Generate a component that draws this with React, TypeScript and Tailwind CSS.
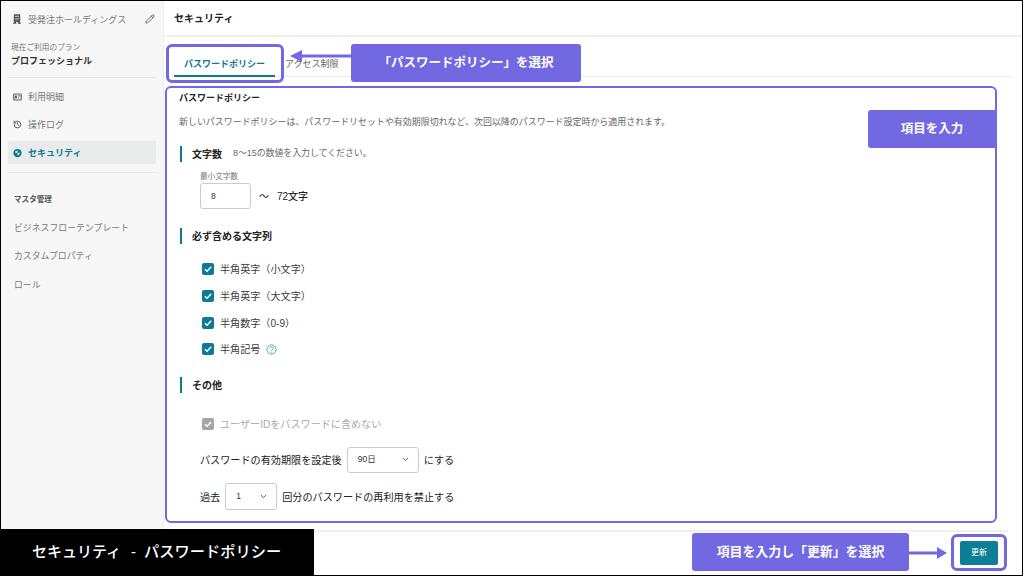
import React from "react";
import { History, Pencil, ChevronDown } from "lucide-react";

function Building() {
  return (
    <svg viewBox="0 0 10 12" className="w-[8px] h-[10px] text-[#555]" fill="currentColor">
      <path d="M1 0h8v11h1v1H6V9.5H4V12H0v-1h1zM3 2v1.5h1.5V2zm2.5 0v1.5H7V2zM3 5v1.5h1.5V5zm2.5 0v1.5H7V5z" fillRule="evenodd" />
    </svg>
  );
}
function Receipt() {
  return (
    <svg viewBox="0 0 12 10" className="w-[9px] h-[8px] text-[#666]" fill="none" stroke="currentColor" strokeWidth="1.6">
      <rect x="1" y="1" width="10" height="8" rx="1" />
      <path d="M7 3.5h2.5M7 6.5h1" />
      <rect x="2.4" y="3" width="3" height="4" fill="currentColor" stroke="none" />
    </svg>
  );
}
function Shield() {
  return (
    <svg viewBox="0 0 12 12" className="w-[9px] h-[10px]" fill="#0c7a91">
      <circle cx="6" cy="6" r="5.5" />
      <path d="M6 2.6 3 4v1.8h3zM6 5.8v3.4l2.6-1.5.5-2z" fill="#e9eaea" />
    </svg>
  );
}
function Check({ disabled }: { disabled?: boolean }) {
  return (
    <span className={`flex h-[12px] w-[12px] items-center justify-center rounded-[2px] ${disabled ? "bg-[#a3a6a8]" : "bg-[#0c7a91]"}`}>
      <svg viewBox="0 0 12 12" className="h-[10px] w-[10px]" fill="none" stroke="#fff" strokeWidth="1.7">
        <path d="M2.2 6.2 4.9 8.8 9.8 3.4" />
      </svg>
    </span>
  );
}
function Section({ children }: { children: React.ReactNode }) {
  return <div className="ml-px flex h-[16px] items-center border-l-2 border-[#0c7a91] pl-[10px] text-[10px] font-bold text-[#222]">{children}</div>;
}
function CheckRow({ label, extra }: { label: string; extra?: React.ReactNode }) {
  return (
    <div className="flex h-[26.7px] items-center gap-[6px] pl-[23px] text-[10.1px] text-[#3c3c3c]">
      <Check />
      <span className="pt-[1px]">{label}</span>
      {extra}
    </div>
  );
}
function Select({ value, w, h }: { value: string; w: string; h: string }) {
  return (
    <span className={`flex items-center justify-between rounded-[3px] border border-[#c9cccd] bg-white pl-[10px] pr-[8px] text-[8.5px] text-[#333] ${w} ${h}`}>
      {value}
      <ChevronDown size={9} strokeWidth={2.4} className="text-[#444]" />
    </span>
  );
}
function NavRow({ icon, label, active }: { icon?: React.ReactNode; label: string; active?: boolean }) {
  return (
    <div className={`mx-[7px] flex h-[23px] items-center gap-[6px] rounded-[2px] px-[5px] text-[9px] ${active ? "bg-[#e9eaea] font-bold text-[#0c7a91]" : "text-[#777]"}`}>
      <span className="flex w-[9px] justify-center">{icon}</span>
      <span className="pt-[2px]">{label}</span>
    </div>
  );
}

export default function App() {
  return (
    <div
      className="relative flex h-[576px] w-[1023px] overflow-hidden border border-black bg-white"
      style={{ fontFamily: '"Liberation Sans","Noto Sans CJK JP",sans-serif' }}
    >
      <aside className="flex w-[163px] shrink-0 flex-col border-r border-[#eeeeee] bg-[#f7f7f7]">
        <div className="flex h-[36px] items-center pl-[12px] pr-[8px] text-[9px] text-[#777]">
          <Building />
          <span className="ml-[7px] flex-1 pt-[3px]">受発注ホールディングス</span>
          <Pencil size={10} className="text-[#555]" />
        </div>
        <div className="mt-[4px] flex h-[14px] items-center pl-[10px] text-[7.7px] text-[#777]">現在ご利用のプラン</div>
        <div className="flex h-[14px] items-center pl-[10px] text-[9px] font-bold text-[#333]">プロフェッショナル</div>
        <div className="mx-[7px] mt-[8px] h-px bg-[#e8e8e8]" />
        <div className="mt-[7px] flex flex-col gap-[5px]">
          <NavRow icon={<Receipt />} label="利用明細" />
          <NavRow icon={<History size={9} strokeWidth={2.4} className="text-[#555]" />} label="操作ログ" />
          <NavRow icon={<Shield />} label="セキュリティ" active />
        </div>
        <div className="mx-[7px] mt-[8px] h-px bg-[#e8e8e8]" />
        <div className="mt-[20px] flex h-[14px] items-center pl-[13px] text-[7.6px] font-bold text-[#555]">マスタ管理</div>
        <div className="mt-[10px] flex flex-col gap-[5.4px]">
          <div className="flex h-[23px] items-center pl-[13px] text-[8.9px] text-[#777]">ビジネスフローテンプレート</div>
          <div className="flex h-[23px] items-center pl-[13px] text-[8.9px] text-[#777]">カスタムプロパティ</div>
          <div className="flex h-[23px] items-center pl-[13px] text-[8.9px] text-[#777]">ロール</div>
        </div>
      </aside>

      <main className="flex min-w-0 flex-1 flex-col">
        <header className="flex h-[36px] shrink-0 items-center border-b-2 border-[#f0f0f0] pl-[10px] text-[10px] font-bold text-[#222]">セキュリティ</header>
        <div className="ml-[10px] mr-[9px] flex h-[40px] shrink-0 items-end border-b border-[#ececec] text-[9px]">
          <div className="mb-[-1px] flex h-[26px] w-[101px] items-center justify-center border-b-2 border-[#0c7a91] pt-[4px] font-bold text-[#0c7a91]">パスワードポリシー</div>
          <div className="ml-[10px] flex h-[26px] items-center pt-[4px] text-[#666]">アクセス制限</div>
        </div>

        <section className="flex-1 pl-[15px]">
          <div className="mt-[14px] flex h-[14px] items-center pt-[2px] text-[9px] font-bold text-[#222]">パスワードポリシー</div>
          <div className="mt-[9px] flex h-[14px] items-center pt-[4px] text-[8.96px] text-[#666]">新しいパスワードポリシーは、パスワードリセットや有効期限切れなど、次回以降のパスワード設定時から適用されます。</div>
          <div className="mt-[18px]">
            <Section>
              文字数
              <span className="ml-[11px] text-[8.9px] font-normal text-[#666]">8〜15の数値を入力してください。</span>
            </Section>
          </div>
          <div className="mt-[6px] flex h-[14px] items-center pl-[21px] pt-[4px] text-[7.6px] text-[#777]">最小文字数</div>
          <div className="mt-px flex items-center pl-[21px] text-[10px] text-[#222]">
            <span className="flex h-[26px] w-[51px] items-center rounded-[3px] border border-[#c9cccd] pl-[10px] text-[8.5px] text-[#333]">8</span>
            <span className="ml-[8px]">〜</span>
            <span className="ml-[8px] font-medium">72文字</span>
          </div>
          <div className="mt-[19px]">
            <Section>必ず含める文字列</Section>
          </div>
          <div className="mt-[12px]">
            <CheckRow label="半角英字（小文字）" />
            <CheckRow label="半角英字（大文字）" />
            <CheckRow label="半角数字（0-9）" />
            <CheckRow
              label="半角記号"
              extra={
                <svg viewBox="0 0 12 12" className="h-[11px] w-[11px]" fill="none" stroke="#3ba6bd" strokeWidth="1">
                  <circle cx="6" cy="6" r="5" />
                  <path d="M4.4 4.7a1.7 1.7 0 1 1 2.5 1.5c-.6.3-.9.7-.9 1.3" />
                  <path d="M6 8.6v.9" />
                </svg>
              }
            />
          </div>
          <div className="mt-[14px]">
            <Section><span className="pt-[2px]">その他</span></Section>
          </div>
          <div className="mt-[18px] flex h-[27px] items-center gap-[6px] pl-[23px] text-[10.1px] text-[#aaaaaa]">
            <Check disabled />
            <span className="pt-[1px]">ユーザーIDをパスワードに含めない</span>
          </div>
          <div className="mt-[9px] flex items-center pl-[21px] text-[10.15px] text-[#222]">
            <span className="pt-[2px]">パスワードの有効期限を設定後</span>
            <span className="mx-[5px]"><Select value="90日" w="w-[72px]" h="h-[26px]" /></span>
            <span className="pt-[2px]">にする</span>
          </div>
          <div className="mt-[10px] flex items-center pl-[21px] text-[10.15px] text-[#222]">
            <span className="pt-[3px]">過去</span>
            <span className="mx-[5px]"><Select value="1" w="w-[52px]" h="h-[27px]" /></span>
            <span className="pt-[3px]">回分のパスワードの再利用を禁止する</span>
          </div>
        </section>

        <footer className="mr-[14px] flex h-[45px] shrink-0 justify-end border-t-2 border-[#f0f0f0] pr-[10px] pt-[9px]">
          <span className="flex h-[24px] w-[38px] items-center justify-center rounded-[2px] bg-[#0c7f96] text-[8px] text-white">更新</span>
        </footer>
      </main>

      {/* annotations */}
      <div className="absolute left-[165px] top-[43px] h-[39px] w-[118px] rounded-[6px] border-[3px] border-[#7268e2]" />
      <div className="absolute left-[164px] top-[85px] h-[437px] w-[832px] rounded-[6px] border-[2.5px] border-[#7268e2]" />
      <div className="absolute left-[950px] top-[533px] h-[37px] w-[56px] rounded-[6px] border-[3px] border-[#7268e2]" />

      <div className="absolute left-[350px] top-[43px] flex h-[38px] w-[230px] items-center justify-center rounded-[3px] bg-[#7268e2] text-[12.5px] font-bold text-white">「パスワードポリシー」を選択</div>
      <svg className="absolute left-[289px] top-[48px]" width="62" height="16" viewBox="0 0 62 16" fill="#7268e2">
        <path d="M0 7 12 1v4.5h50v3H12V13z" />
      </svg>

      <div className="absolute right-[26px] top-[109px] flex h-[38px] w-[128px] items-center justify-center rounded-l-[3px] bg-[#7268e2] text-[12.5px] font-bold text-white">項目を入力</div>

      <div className="absolute left-[691px] top-[532px] flex h-[38px] w-[217px] items-center justify-center rounded-[3px] bg-[#7268e2] text-[12.9px] font-bold text-white">項目を入力し「更新」を選択</div>
      <svg className="absolute left-[908px] top-[545px]" width="38" height="14" viewBox="0 0 38 14" fill="#7268e2">
        <path d="M0 5.5h28V1l10 6-10 6V8.5H0z" />
      </svg>

      <div className="absolute bottom-[-1px] left-[-1px] flex h-[47px] w-[314px] items-center whitespace-pre bg-black pl-[32px] text-[15px] font-medium text-white">
        <span>セキュリティ</span>
        <span className="ml-[10px]">-</span>
        <span className="ml-[8px] text-[15.25px]">パスワードポリシー</span>
      </div>
    </div>
  );
}
